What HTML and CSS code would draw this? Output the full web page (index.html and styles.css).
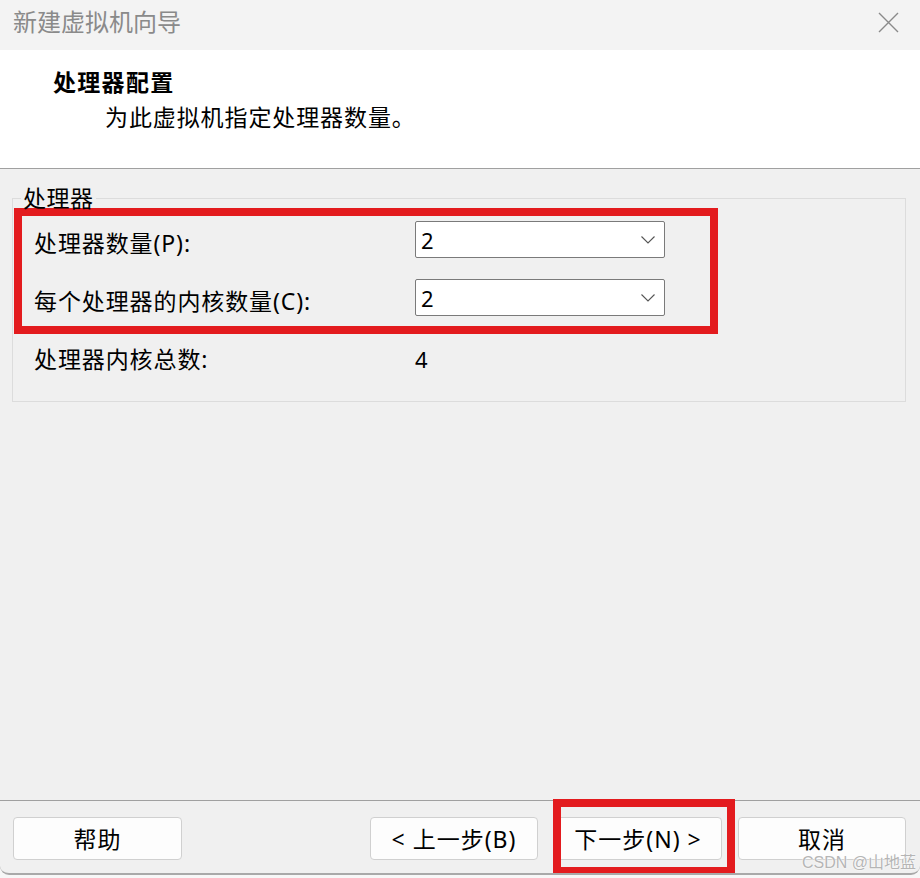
FILE: index.html
```html
<!DOCTYPE html>
<html lang="zh-CN">
<head>
<meta charset="utf-8">
<title>新建虚拟机向导</title>
<link rel="stylesheet" href="styles.css">
</head>
<body>
<div class="window">
  <div class="titlebar">
    <span class="title">新建虚拟机向导</span>
    <svg class="close" width="21" height="21" viewBox="0 0 21 21"><path d="M1 1 L20 20 M20 1 L1 20" stroke="#8a8a8a" stroke-width="1.4" fill="none"/></svg>
  </div>
  <div class="header">
    <div class="heading">处理器配置</div>
    <div class="subtitle">为此虚拟机指定处理器数量。</div>
  </div>
  <div class="main">
    <fieldset class="group">
      <legend class="legend">处理器</legend>
      <div class="mark-box">
        <div class="row">
          <span class="label">处理器数量(P):</span>
          <div class="combo"><span class="val">2</span><svg class="chev" width="14" height="8" viewBox="0 0 14 8"><path d="M0.5 0.5 L7 7 L13.5 0.5" stroke="#555" stroke-width="1.1" fill="none"/></svg></div>
        </div>
        <div class="row">
          <span class="label">每个处理器的内核数量(C):</span>
          <div class="combo"><span class="val">2</span><svg class="chev" width="14" height="8" viewBox="0 0 14 8"><path d="M0.5 0.5 L7 7 L13.5 0.5" stroke="#555" stroke-width="1.1" fill="none"/></svg></div>
        </div>
      </div>
      <div class="total">
        <span class="label">处理器内核总数:</span>
        <span class="val">4</span>
      </div>
    </fieldset>
  </div>
  <div class="footer">
    <button class="btn help">帮助</button>
    <button class="btn">&lt; 上一步(B)</button>
    <button class="btn next">下一步(N) &gt;<span class="mark"></span></button>
    <button class="btn">取消</button>
  </div>
  <div class="watermark">CSDN @山地蓝</div>
</div>
</body>
</html>
```
FILE: styles.css
```css
html, body {
  margin: 0;
  padding: 0;
}
body {
  background: #f7f7f7;
  font-family: "Noto Sans", "Noto Sans CJK SC", sans-serif;
  color: #000;
  width: 920px;
  height: 878px;
  overflow: hidden;
}
.window {
  position: relative;
  height: 875px;
  box-sizing: border-box;
  background: #f0f0f0;
  border-bottom: 2px solid #a9a9a9;
  border-radius: 0 0 9px 9px;
  display: flex;
  flex-direction: column;
  overflow: hidden;
}
.titlebar {
  height: 50px;
  flex: none;
  background: #f3f3f3;
  display: flex;
  justify-content: space-between;
  align-items: flex-start;
  padding: 7px 21px 0 13px;
  box-sizing: border-box;
}
.title {
  font-size: 24px;
  line-height: 30px;
  color: #8a8a8a;
}
.close {
  margin-top: 5px;
}
.header {
  height: 119px;
  flex: none;
  box-sizing: border-box;
  background: #fff;
  border-bottom: 1px solid #a0a0a0;
  padding: 17px 0 0 53px;
}
.heading {
  font-size: 23px;
  line-height: 30px;
  font-weight: 700;
  letter-spacing: 1.3px;
}
.subtitle {
  font-size: 23px;
  line-height: 30px;
  letter-spacing: 0.9px;
  margin: 5px 0 0 52px;
}
.main {
  flex: 1;
}
.group {
  margin: 20px 14px 0 12px;
  padding: 0 0 27px 0;
  border: 1px solid #dcdcdc;
  min-width: 0;
}
.legend {
  font-size: 23px;
  line-height: 18px;
  letter-spacing: 0.5px;
  margin-left: 8px;
  padding: 0 2px;
}
.mark-box {
  margin: 1px 0 0 1px;
  width: 704px;
  box-sizing: border-box;
  border: 8px solid #e31b1e;
  padding: 5px 0 10px 12px;
  display: flex;
  flex-direction: column;
  gap: 21px;
}
.row {
  display: grid;
  grid-template-columns: 381px 250px;
  align-items: center;
  height: 37px;
}
.label {
  font-size: 23px;
  line-height: 30px;
  letter-spacing: 0.9px;
  padding-top: 6px;
}
.combo {
  height: 37px;
  box-sizing: border-box;
  background: #fff;
  border: 1px solid #7a7a7a;
  border-radius: 2px;
  display: flex;
  align-items: center;
  justify-content: space-between;
  padding: 0 9px 0 5px;
}
.val {
  font-size: 22px;
  line-height: 30px;
}
.chev {
  margin-top: 1px;
}
.total {
  display: grid;
  grid-template-columns: 381px 100px;
  align-items: center;
  margin-top: 10px;
  padding-left: 21px;
  height: 30px;
}
.total .label {
  padding-top: 0;
}
.footer {
  flex: none;
  height: 73px;
  box-sizing: border-box;
  border-top: 1px solid #a0a0a0;
  padding: 16px 14px 0 13px;
  display: flex;
  align-items: flex-start;
  gap: 16px;
}
.btn {
  width: 168px;
  height: 43px;
  box-sizing: border-box;
  background: #fdfdfd;
  border: 1px solid #d0d0d0;
  border-radius: 4px;
  font-family: "Noto Sans", "Noto Sans CJK SC", sans-serif;
  font-size: 23px;
  line-height: 30px;
  letter-spacing: 1px;
  color: #000;
  padding: 0;
}
.help {
  width: 169px;
  margin-right: auto;
}
.next {
  position: relative;
}
.mark {
  position: absolute;
  left: -2px;
  right: -14px;
  top: -19px;
  bottom: -16px;
  border: 8px solid #e31b1e;
}
.watermark {
  position: absolute;
  right: 4px;
  bottom: 2px;
  font-family: "Liberation Sans", "Noto Sans CJK SC", sans-serif;
  font-size: 16px;
  line-height: 16px;
  color: #b5b5b5;
  text-shadow: 0 0 2px #fff, 0 0 1px #fff;
}
```
